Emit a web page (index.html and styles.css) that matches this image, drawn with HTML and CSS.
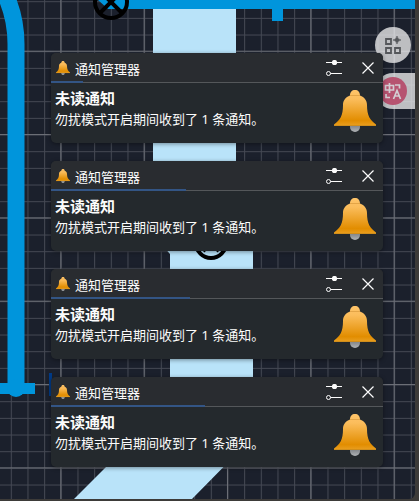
FILE: index.html
```
<!DOCTYPE html>
<html lang="zh-CN">
<head>
<meta charset="utf-8">
<meta name="viewport" content="width=device-width, initial-scale=1">
<title>通知管理器</title>
<link rel="stylesheet" href="styles.css">
</head>
<body>
<svg class="defs" aria-hidden="true">
  <defs>
    <linearGradient id="gold" x1="0" y1="0" x2="0" y2="1">
      <stop offset="0" stop-color="#ffc469"/>
      <stop offset=".25" stop-color="#fbbd5c"/>
      <stop offset=".85" stop-color="#e28d00"/>
      <stop offset="1" stop-color="#eaa022"/>
    </linearGradient>
    <linearGradient id="clapper" x1="0" y1="0" x2="0" y2="1">
      <stop offset="0" stop-color="#7c8084"/>
      <stop offset="1" stop-color="#b0b3b6"/>
    </linearGradient>
    <symbol id="bell" viewBox="0 0 42 42">
      <path d="M16 35h10v2a5 5 0 0 1-10 0z" fill="url(#clapper)"/>
      <path d="M21 0c3 0 5 2 5 5.500C30.500 7 33 10.500 33 15c0 11 3 15 9 19.500V36H0v-1.500C6 30 9 26 9 15c0-4.500 2.500-8 7-9.500C16 2 18 0 21 0z" fill="url(#gold)"/>
      <path d="M16 5.500h10" stroke="#d99a3c" stroke-width=".7"/>
      <path d="M0 35.500h42" stroke="#c98a1c" stroke-width=".8"/>
    </symbol>
    <symbol id="sliders" viewBox="0 0 16 16">
      <path d="M0 2.500h16M4.500 13.500H16" stroke="#fcfcfc" fill="none"/>
      <circle cx="8.500" cy="2.500" r="2.600" fill="#fcfcfc"/>
      <circle cx="2.500" cy="13.500" r="2" stroke="#fcfcfc" fill="none"/>
    </symbol>
    <symbol id="close" viewBox="0 0 16 16">
      <path d="M2.500 2.500l11 11M13.500 2.500l-11 11" stroke="#fcfcfc" stroke-width="1.200" fill="none"/>
    </symbol>
  </defs>
</svg>

<div class="canvas">
  <svg class="map" aria-hidden="true">
    <defs>
      <pattern id="minor" x="60.800" y="51.200" width="16.667" height="16.667" patternUnits="userSpaceOnUse">
        <path d="M.5 0v17M0 .5h17" stroke="#454954" fill="none"/>
      </pattern>
      <pattern id="major" x="60.300" y="50.700" width="83.333" height="83.333" patternUnits="userSpaceOnUse">
        <path d="M.5 0v84M0 .5h84" stroke="#6d7078" fill="none"/>
      </pattern>
    </defs>
    <rect width="100%" height="100%" fill="url(#minor)"/>
    <rect width="100%" height="100%" fill="url(#major)"/>
    <path d="M153 5h83v228l17 17v187L192 499H74l96-96V254l-17-19z" fill="#b9e3f9"/>
    <path d="M-4-22Q16 8 16 44V388" stroke="#0095dc" stroke-width="17" fill="none"/>
    <path d="M0 383h35v11H0z" fill="#0095dc"/>
    <circle cx="16" cy="388" r="9" fill="#0095dc"/>
    <path d="M49 373h3v23H49z" fill="#003a86"/>
    <path d="M98 0h902v9H108z" fill="#0095dc"/>
    <path d="M272 8h11v13h-11z" fill="#0095dc"/>
    <g fill="none" stroke="#000" stroke-width="4">
      <circle cx="111" cy="2" r="16"/>
      <path d="M100-9l22 22M122-9l-22 22"/>
      <circle cx="211" cy="243" r="15"/>
      <path d="M203 235l16 16M219 235l-16 16"/>
    </g>
  </svg>
  <div class="dock">
    <button class="tool tool-apps" aria-label="应用">
      <svg width="18" height="18" viewBox="0 0 18 18" fill="none" stroke="#55575b" stroke-width="1.800">
        <path d="M2 3h5v5H2zM2 12h5v5H2zM11 12h5v5h-5z"/>
        <path d="M13 0q.5 3.500 4 4-3.500.5-4 4-.5-3.500-4-4 3.500-.5 4-4z" fill="#55575b" stroke="#55575b" stroke-width=".6"/>
      </svg>
    </button>
    <button class="tool tool-translate" aria-label="翻译">
      <span class="disc">
        <svg width="18" height="18" viewBox="0 0 18 18" fill="none" stroke="#d3cdd2" stroke-width="1.700">
          <path d="M1.500 3.500h8v4.500h-8zM5.500 1v10M11 3h4.500v3.500M2 12v3.500h4M9.500 17l3.500-8.500L16.500 17M10.500 14h5"/>
        </svg>
      </span>
    </button>
  </div>
</div>

<main class="stack">
  <article class="card">
    <header class="bar">
      <svg class="app-icon" aria-hidden="true"><use href="#bell"/></svg>
      <span class="app-name">通知管理器</span>
      <button class="action" aria-label="配置"><svg><use href="#sliders"/></svg></button>
      <button class="action" aria-label="关闭"><svg><use href="#close"/></svg></button>
      <span class="timer" style="width:9.600%"></span>
    </header>
    <div class="content">
      <div class="message"><h2>未读通知</h2><p>勿扰模式开启期间收到了 1 条通知。</p></div>
      <svg class="bell" aria-hidden="true"><use href="#bell"/></svg>
    </div>
  </article>
  <article class="card">
    <header class="bar">
      <svg class="app-icon" aria-hidden="true"><use href="#bell"/></svg>
      <span class="app-name">通知管理器</span>
      <button class="action" aria-label="配置"><svg><use href="#sliders"/></svg></button>
      <button class="action" aria-label="关闭"><svg><use href="#close"/></svg></button>
      <span class="timer" style="width:40.700%"></span>
    </header>
    <div class="content">
      <div class="message"><h2>未读通知</h2><p>勿扰模式开启期间收到了 1 条通知。</p></div>
      <svg class="bell" aria-hidden="true"><use href="#bell"/></svg>
    </div>
  </article>
  <article class="card">
    <header class="bar">
      <svg class="app-icon" aria-hidden="true"><use href="#bell"/></svg>
      <span class="app-name">通知管理器</span>
      <button class="action" aria-label="配置"><svg><use href="#sliders"/></svg></button>
      <button class="action" aria-label="关闭"><svg><use href="#close"/></svg></button>
      <span class="timer" style="width:41.900%"></span>
    </header>
    <div class="content">
      <div class="message"><h2>未读通知</h2><p>勿扰模式开启期间收到了 1 条通知。</p></div>
      <svg class="bell" aria-hidden="true"><use href="#bell"/></svg>
    </div>
  </article>
  <article class="card">
    <header class="bar">
      <svg class="app-icon" aria-hidden="true"><use href="#bell"/></svg>
      <span class="app-name">通知管理器</span>
      <button class="action" aria-label="配置"><svg><use href="#sliders"/></svg></button>
      <button class="action" aria-label="关闭"><svg><use href="#close"/></svg></button>
      <span class="timer" style="width:46.400%"></span>
    </header>
    <div class="content">
      <div class="message"><h2>未读通知</h2><p>勿扰模式开启期间收到了 1 条通知。</p></div>
      <svg class="bell" aria-hidden="true"><use href="#bell"/></svg>
    </div>
  </article>
</main>
</body>
</html>
```
FILE: styles.css
```
* {
  box-sizing: border-box;
}

body {
  margin: 0;
  min-height: 100vh;
  position: relative;
  background: #3d3b39;
  color: #fcfcfc;
  font: 13px/20px "Noto Sans", "Noto Sans CJK SC", sans-serif;
}

button {
  border: 0;
  padding: 0;
  background: none;
  color: inherit;
}

h2,
p {
  margin: 0;
}

svg {
  display: block;
}

.defs {
  position: absolute;
  width: 0;
  height: 0;
}

/* Drawing surface behind the notifications */
.canvas {
  position: absolute;
  inset: 0 4px 2px 0;
  overflow: hidden;
  border-radius: 0 0 6px 0;
  background: #1b202c;
}

.map {
  width: 100%;
  height: 100%;
}

.dock {
  position: absolute;
  top: 27px;
  right: 0;
  display: flex;
  flex-direction: column;
  align-items: flex-end;
  gap: 10px;
}

.tool {
  display: flex;
  align-items: center;
  height: 36px;
  background: rgba(235, 235, 236, 0.78);
}

.tool-apps {
  justify-content: center;
  width: 36px;
  margin-right: 4px;
  border-radius: 50%;
}

.tool-translate {
  width: 40px;
  padding-left: 4px;
  border-radius: 18px 0 0 18px;
}

.disc {
  display: flex;
  align-items: center;
  justify-content: center;
  width: 28px;
  height: 28px;
  border-radius: 50%;
  background: #b65370;
}

/* Notification popups */
.stack {
  position: relative;
  display: flex;
  flex-direction: column;
  gap: 18px;
  padding: 53px 36px 34px 51px;
}

.card {
  overflow: hidden;
  border-radius: 5px;
  background: #24292d;
  box-shadow: 0 1px 4px rgba(0, 0, 0, 0.4);
}

.bar {
  position: relative;
  display: flex;
  align-items: center;
  height: 30px;
  padding: 1px 7px 0 5px;
  border-bottom: 1px solid #54575a;
  background: #292c30;
}

.app-icon {
  width: 14px;
  height: 14px;
}

.app-name {
  flex: 1;
  margin-left: 5px;
  padding-top: 2px;
}

.action + .action {
  margin-left: 18px;
}

.action svg {
  width: 16px;
  height: 16px;
}

.timer {
  position: absolute;
  left: 0;
  bottom: -1px;
  height: 2px;
  background: #335585;
}

.content {
  display: flex;
  align-items: flex-start;
  justify-content: space-between;
  height: 60px;
  padding: 5px 7px 0 4px;
}

h2 {
  font-size: 15px;
  line-height: 21px;
  font-weight: 700;
}

.bell {
  width: 42px;
  height: 42px;
  margin-top: 2px;
}
```
